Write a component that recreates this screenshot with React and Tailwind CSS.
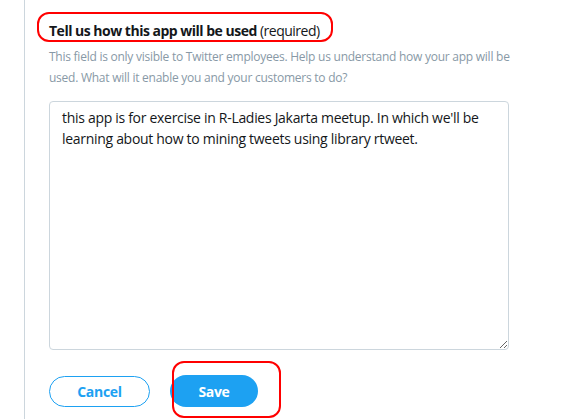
export default function App() {
  return (
    <div className="w-[575px] h-[419px] bg-white overflow-hidden relative" style={{ fontFamily: '"Open Sans", "Noto Sans", sans-serif' }}>
      <div className="flex h-full">
        <div className="w-[24px] shrink-0" />
        <div className="w-px shrink-0 bg-[#ccd6dd]" />
        <div className="pl-[24px] pt-[21px] flex flex-col">
          <div className="relative">
            <div className="text-[14px] leading-[20px] tracking-[-0.5px] text-[#14171a] whitespace-nowrap">
              <span className="font-bold">Tell us how this app will be used</span> (required)
            </div>
            <div className="absolute left-[-12px] top-[-9px] w-[296px] h-[30px] border-2 border-[#ff0000] rounded-[12px]" />
          </div>
          <div className="mt-[5px] text-[12px] leading-[21px] tracking-[-0.25px] text-[#8899a6] w-[470px]">
            This field is only visible to Twitter employees. Help us understand how your app will be used. What will it enable you and your customers to do?
          </div>
          <textarea
            readOnly
            className="mt-[13px] w-[460px] h-[249px] border border-[#ccd6dd] rounded-[4px] px-[12px] py-[5px] text-[14px] leading-[21px] tracking-[-0.3px] text-[#14171a] resize-y outline-none"
            defaultValue={"this app is for exercise in R-Ladies Jakarta meetup. In which we'll be learning about how to mining tweets using library rtweet."}
          />
          <div className="mt-[25px] flex items-center gap-[20px]">
            <button className="w-[101px] h-[31px] rounded-full border border-[#1da1f2] text-[#1da1f2] text-[14px] tracking-[-0.3px] font-bold bg-white">Cancel</button>
            <div className="relative">
              <button className="w-[88px] h-[32px] rounded-full bg-[#1da1f2] text-white text-[14px] tracking-[-0.3px] font-bold">Save</button>
              <div className="absolute left-[2px] top-[-14px] w-[109px] h-[57px] border-2 border-[#ff0000] rounded-[12px]" />
            </div>
          </div>
        </div>
      </div>
    </div>
  );
}
